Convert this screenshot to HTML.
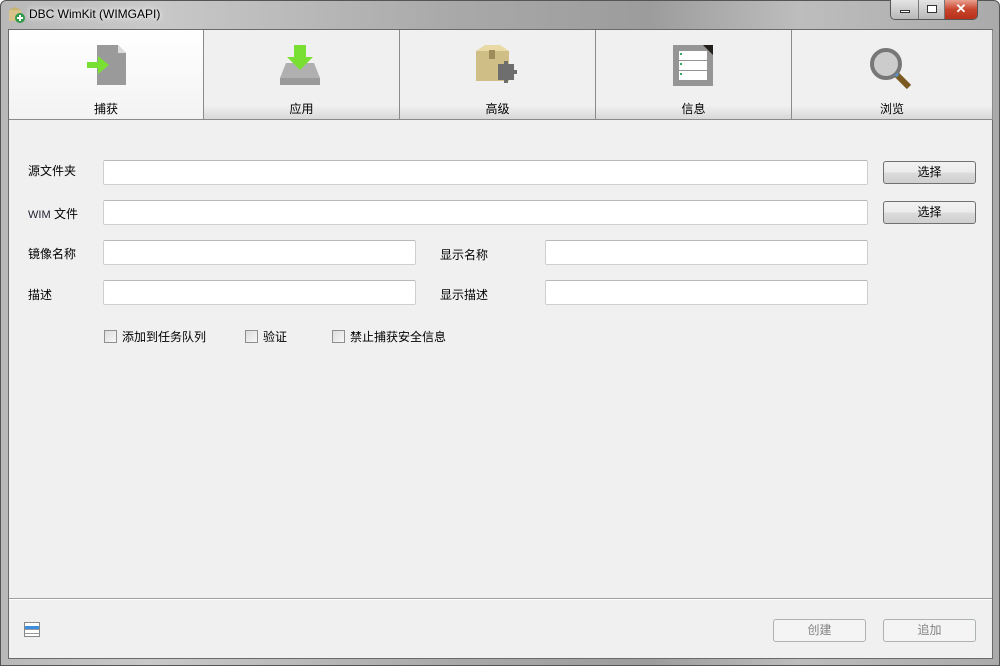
<!DOCTYPE html>
<html><head><meta charset="utf-8"><style>
*{margin:0;padding:0;box-sizing:border-box}
body{width:1000px;height:666px;overflow:hidden;background:#fff;font-family:"Liberation Sans","Noto Sans CJK SC",sans-serif;font-size:12px;color:#000;position:relative}
.frame{position:absolute;left:0;top:0;width:1000px;height:666px;border-radius:6px 6px 0 0;background:linear-gradient(90deg,#b8b8b8 0%,#c9c9c9 15%,#a9a9a9 45%,#9c9c9c 65%,#bdbdbd 80%,#aaaaaa 100%);border:1px solid #555}
.client{position:absolute;left:8px;top:29px;width:985px;height:630px;background:#f0f0f0;border:1px solid #6a6a6a}
.title{position:absolute;left:29px;top:7px;font-size:12px;color:#000;text-shadow:0 0 8px #fff,0 0 4px #fff}
.abs{position:absolute}
.tab{position:absolute;top:0;height:90px;border-right:1px solid #8a8a8a;border-bottom:1px solid #8a8a8a;background:linear-gradient(#f0f0f0 0,#f0f0f0 85%,#d8d8d8 100%);text-align:center}
.tab span{position:absolute;left:0;right:0;top:70px;font-size:12px}
.inp{position:absolute;height:25px;background:#fff;border:1px solid #cfcfcf;border-top-color:#b9b9b9;border-radius:2px}
.lbl{position:absolute;font-size:12px}
.btn{position:absolute;width:93px;height:23px;border:1px solid #707070;border-radius:3px;background:linear-gradient(#f2f2f2 0,#ebebeb 50%,#dcdcdc 51%,#cfcfcf 100%);text-align:center;line-height:21px}
.btn.dis{border-color:#adb2b5;background:#f4f4f4;color:#838383}
.cb{position:absolute;width:13px;height:13px;border:1px solid #8f8f8f;background:linear-gradient(135deg,#dcdcdc,#f8f8f8)}
</style></head><body>
<div class="frame"></div>
<svg class="abs" style="left:8px;top:6px" width="18" height="18"><rect x="1" y="4" width="12" height="11" fill="#d7c38a"/><path d="M1 4 L7 1 L13 4Z" fill="#c9b16e"/><circle cx="12" cy="12" r="5" fill="#2f9a4a"/><path d="M12 9v6M9 12h6" stroke="#fff" stroke-width="2"/></svg>
<div class="title">DBC WimKit (WIMGAPI)</div>
<div class="abs" style="left:890px;top:0;width:88px;height:20px;border:1px solid #555;border-top:none;border-radius:0 0 5px 5px;overflow:hidden;display:flex">
<div style="width:28px;background:linear-gradient(#e4e4e4,#b8b8b8);border-right:1px solid #777;position:relative"><div class="abs" style="left:9px;top:10px;width:10px;height:3px;background:#fff;border:1px solid #333"></div></div>
<div style="width:26px;background:linear-gradient(#e4e4e4,#b8b8b8);border-right:1px solid #777;position:relative"><div class="abs" style="left:8px;top:5px;width:10px;height:8px;background:#fff;border:1px solid #333"></div></div>
<div style="flex:1;background:linear-gradient(#e8a090,#c8442c 50%,#b8301a);color:#fff;text-align:center;font-weight:bold;font-size:13px;line-height:18px">✕</div>
</div>
<div class="client">
<div class="tab" style="left:0;width:195px;background:linear-gradient(#fff,#f3f3f3)"><span>捕获</span>
<svg class="abs" style="left:78px;top:15px" width="40" height="42"><path d="M10 0H31L39 8V40H10Z" fill="#9a9a9a"/><path d="M31 0L39 8H31Z" fill="#dcdcdc"/><path d="M0 17H11V11L22 20L11 29V23H0Z" fill="#79e033"/></svg></div>
<div class="tab" style="left:195px;width:196px"><span>应用</span>
<svg class="abs" style="left:76px;top:15px" width="42" height="42"><path d="M0 33L6 18H34L40 33Z" fill="#b0b0b0"/><rect x="0" y="33" width="40" height="7" fill="#9a9a9a"/><path d="M14 0H26V12H33L20 25L7 12H14Z" fill="#79e033"/></svg></div>
<div class="tab" style="left:391px;width:196px"><span>高级</span>
<svg class="abs" style="left:74px;top:14px" width="46" height="40"><rect x="2" y="7" width="33" height="30" fill="#cfbe85"/><path d="M2 7L11 1H26L35 7Z" fill="#e8d9a5"/><rect x="15" y="6" width="6" height="9" fill="#9e8c5a"/><path d="M24 20h6v-3h4v3h6v6h3v4h-3v6h-6v3h-4v-3h-6Z" fill="#6e6e6e"/></svg></div>
<div class="tab" style="left:587px;width:196px"><span>信息</span>
<svg class="abs" style="left:77px;top:15px" width="42" height="42"><rect x="0" y="0" width="40" height="41" fill="#959595"/><rect x="6" y="6" width="28" height="9" fill="#fff"/><rect x="6" y="16" width="28" height="9" fill="#fff"/><rect x="6" y="26" width="28" height="9" fill="#fff"/><path d="M30 0H40V10Z" fill="#231f1a"/><rect x="7" y="8" width="2" height="2" fill="#3a6"/><rect x="7" y="18" width="2" height="2" fill="#3a6"/><rect x="7" y="28" width="2" height="2" fill="#3a6"/></svg></div>
<div class="tab" style="left:783px;width:201px"><span>浏览</span>
<svg class="abs" style="left:78px;top:18px" width="44" height="44"><circle cx="16" cy="16" r="14" fill="#ccc" stroke="#777" stroke-width="4"/><path d="M27 27L39 39" stroke="#7b5a22" stroke-width="6"/><path d="M26 26L28 28" stroke="#5a8fc0" stroke-width="4"/></svg></div>

<div class="lbl" style="left:19px;top:132px">源文件夹</div>
<div class="inp" style="left:94px;top:130px;width:765px"></div>
<div class="btn" style="left:874px;top:131px">选择</div>
<div class="lbl" style="left:19px;top:175px"><span style="color:#223;font-size:11px">WIM</span> 文件</div>
<div class="inp" style="left:94px;top:170px;width:765px"></div>
<div class="btn" style="left:874px;top:171px">选择</div>
<div class="lbl" style="left:19px;top:215px">镜像名称</div>
<div class="inp" style="left:94px;top:210px;width:313px"></div>
<div class="lbl" style="left:431px;top:216px">显示名称</div>
<div class="inp" style="left:536px;top:210px;width:323px"></div>
<div class="lbl" style="left:19px;top:256px">描述</div>
<div class="inp" style="left:94px;top:250px;width:313px"></div>
<div class="lbl" style="left:431px;top:256px">显示描述</div>
<div class="inp" style="left:536px;top:250px;width:323px"></div>
<div class="cb" style="left:95px;top:300px"></div><div class="lbl" style="left:113px;top:298px">添加到任务队列</div>
<div class="cb" style="left:236px;top:300px"></div><div class="lbl" style="left:254px;top:298px">验证</div>
<div class="cb" style="left:323px;top:300px"></div><div class="lbl" style="left:341px;top:298px">禁止捕获安全信息</div>

<div class="abs" style="left:0;top:568px;width:983px;height:2px;border-top:1px solid #a0a0a0;border-bottom:1px solid #fff"></div>
<svg class="abs" style="left:15px;top:592px" width="16" height="16"><rect x="0.5" y="0.5" width="15" height="14" fill="#fff" stroke="#888"/><rect x="1" y="4" width="14" height="3" fill="#3d8ee0"/><path d="M1 7.5H15M1 11.5H15" stroke="#999"/></svg>
<div class="btn dis" style="left:764px;top:589px">创建</div>
<div class="btn dis" style="left:874px;top:589px">追加</div>
</div>
</body></html>
